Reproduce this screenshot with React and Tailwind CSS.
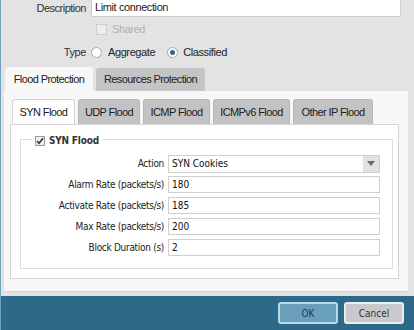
import { useState } from 'react';

const font = { fontFamily: '"Liberation Sans", Arial, sans-serif' };
const tahoma = { fontFamily: '"DejaVu Sans Condensed", "DejaVu Sans", sans-serif' };

const RateRow = ({ label, value }) => (
  <div className="flex items-center h-[21px]">
    <div className="w-[146px] text-right pr-[4px] text-[10px] tracking-[-0.3px] text-[#222]" style={tahoma}>{label}</div>
    <div className="w-[212px] h-[17px] bg-white border border-[#cfcfcf] text-[10px] pl-[3px] leading-[15px] text-[#111]" style={tahoma}>
      {value}
    </div>
  </div>
);

const App = () => {
  const [type, setType] = useState('classified');
  const [outerTab, setOuterTab] = useState('flood');
  const [innerTab, setInnerTab] = useState('syn');

  const innerTabs = [
    { id: 'syn', label: 'SYN Flood', w: 'w-[63px]' },
    { id: 'udp', label: 'UDP Flood', w: 'w-[62px]' },
    { id: 'icmp', label: 'ICMP Flood', w: 'w-[67px]' },
    { id: 'icmpv6', label: 'ICMPv6 Flood', w: 'w-[77px]' },
    { id: 'other', label: 'Other IP Flood', w: 'w-[80px]' },
  ];

  return (
    <div className="w-[414px] h-[330px] overflow-hidden bg-[#e3e3e3] flex flex-col border-l border-[#6fa3bd] text-[#222]" style={font}>
      {/* Formulario superior */}
      <div className="h-[67px] flex flex-col">
        <div className="flex items-center h-[17px]">
          <div className="w-[90px] text-right pr-[5px] text-[11px] tracking-[-0.5px] text-[#333]">Description</div>
          <div className="w-[310px] h-[17px] bg-white border border-t-0 border-[#cdcdcd] text-[11px] tracking-[-0.4px] pl-[3px] leading-[15px]">
            Limit connection
          </div>
        </div>
        <div className="flex items-center h-[12px] mt-[6px] pl-[95px]">
          <div className="w-[11px] h-[11px] border border-[#cfcfcf] bg-[#ececec]"></div>
          <span className="ml-[5px] text-[11px] tracking-[-0.4px] text-[#b0b0b0]">Shared</span>
        </div>
        <div className="flex items-center h-[12px] mt-[11px]">
          <div className="w-[90px] text-right pr-[5px] text-[11px] tracking-[-0.4px] text-[#333]">Type</div>
          <label className="flex items-center cursor-pointer" onClick={() => setType('aggregate')}>
            <span className="w-[11px] h-[11px] rounded-full border border-[#a8a8a8] bg-white flex items-center justify-center">
              {type === 'aggregate' && <span className="w-[5px] h-[5px] rounded-full bg-[#2d6a89]"></span>}
            </span>
            <span className="ml-[6px] text-[11px] tracking-[-0.4px]">Aggregate</span>
          </label>
          <label className="flex items-center cursor-pointer ml-[12px]" onClick={() => setType('classified')}>
            <span className="w-[11px] h-[11px] rounded-full border border-[#a8a8a8] bg-white flex items-center justify-center">
              {type === 'classified' && <span className="w-[5px] h-[5px] rounded-full bg-[#2d6a89]"></span>}
            </span>
            <span className="ml-[5px] text-[11px] tracking-[-0.4px]">Classified</span>
          </label>
        </div>
      </div>

      {/* Abas externas */}
      <div className="flex items-end h-[24px] pl-[4px] gap-[3px]">
        <button
          onClick={() => setOuterTab('flood')}
          className={`w-[88px] h-[24px] rounded-t-[3px] text-[11px] tracking-[-0.6px] ${outerTab === 'flood' ? 'bg-[#f7f7f7]' : 'bg-[#c4c4c4]'}`}
        >
          Flood Protection
        </button>
        <button
          onClick={() => setOuterTab('resources')}
          className={`w-[109px] h-[23px] rounded-t-[3px] text-[11px] tracking-[-0.6px] ${outerTab === 'resources' ? 'bg-[#f7f7f7]' : 'bg-[#c4c4c4]'}`}
        >
          Resources Protection
        </button>
      </div>

      {/* Painel externo */}
      <div className="ml-[3px] w-[404px] h-[201px] bg-[#f7f7f7] border-b border-[#d6d6d6] pt-[8px] pl-[6px]">
        <div className="flex items-end h-[25px] pl-[2px] gap-[3px]">
          {innerTabs.map(t => (
            <button
              key={t.id}
              onClick={() => setInnerTab(t.id)}
              className={`${t.w} h-[25px] rounded-t-[3px] text-[11px] tracking-[-0.6px] ${
                innerTab === t.id ? 'bg-white border border-b-0 border-[#d4d4d4]' : 'bg-[#c3c3c3] border border-[#b8b8b8] border-b-0'
              }`}
            >
              {t.label}
            </button>
          ))}
        </div>

        {/* Painel interno */}
        <div className="w-[389px] h-[155px] bg-white border border-[#d4d4d4] pt-[14px] pl-[9px]">
          <div className="relative w-[373px] h-[130px] border border-[#dcdcdc] pt-[13px] pl-[1px]">
            <div className="absolute -top-[7px] left-[11px] flex items-center bg-white px-[3px]">
              <span className="w-[10px] h-[10px] border border-[#9a9a9a] bg-[#f0f0f0] flex items-center justify-center">
                <svg width="8" height="8" viewBox="0 0 8 8">
                  <path d="M1 4 L3 6.3 L7 1.2" fill="none" stroke="#333" strokeWidth="1.6" />
                </svg>
              </span>
              <span className="ml-[4px] text-[10px] font-bold tracking-[-0.2px] text-[#333]" style={tahoma}>SYN Flood</span>
            </div>

            <div className="flex items-center h-[21px]">
              <div className="w-[146px] text-right pr-[4px] text-[10px] tracking-[-0.3px] text-[#222]" style={tahoma}>Action</div>
              <div className="w-[212px] h-[18px] bg-white border border-[#cfcfcf] flex">
                <div className="flex-1 text-[10px] pl-[3px] leading-[16px] text-[#111]" style={tahoma}>SYN Cookies</div>
                <div className="w-[16px] h-full bg-[#e2e2e2] flex items-center justify-center">
                  <svg width="8" height="5" viewBox="0 0 8 5">
                    <path d="M0 0 H8 L4 5 Z" fill="#6a6a6a" />
                  </svg>
                </div>
              </div>
            </div>
            <RateRow label="Alarm Rate (packets/s)" value="180" />
            <RateRow label="Activate Rate (packets/s)" value="185" />
            <RateRow label="Max Rate (packets/s)" value="200" />
            <RateRow label="Block Duration (s)" value="2" />
          </div>
        </div>
      </div>

      <div className="h-[4px] bg-[#e3e3e3]"></div>

      {/* Rodapé */}
      <div className="flex-1 bg-[#2d6a89] flex items-center justify-end gap-[6px] pr-[10px]">
        <button className="w-[60px] h-[22px] rounded-[3px] bg-[#6a9fb9] border-2 border-[#b6dcec] text-[10px] text-[#1d3b4a]" style={tahoma}>
          OK
        </button>
        <button className="w-[60px] h-[22px] rounded-[3px] bg-[#c9c9cd] border-2 border-[#ececec] text-[10px] text-[#333]" style={tahoma}>
          Cancel
        </button>
      </div>
    </div>
  );
};

export default App;
